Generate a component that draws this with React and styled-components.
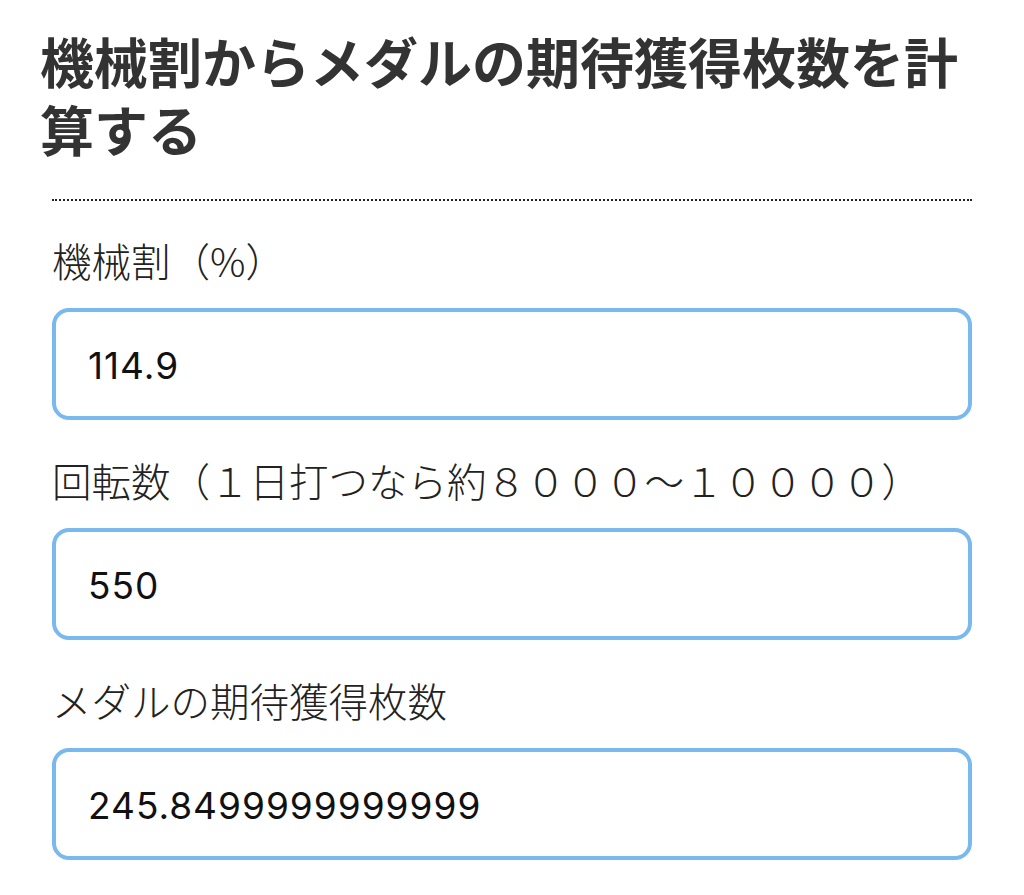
import React from "react";
import styled, { createGlobalStyle } from "styled-components";

const Global = createGlobalStyle`
  html, body { margin: 0; padding: 0; background: #fff; }
  body { font-family: "Noto Sans CJK JP", "Noto Sans", sans-serif; }
`;

const Page = styled.div`
  width: 1024px;
  box-sizing: border-box;
  padding: 27px 40px 0 40px;
`;

const Title = styled.h1`
  margin: 0;
  font-family: "Noto Sans CJK JP", sans-serif;
  font-weight: 700;
  font-size: 54px;
  line-height: 68px;
  color: #333;
  letter-spacing: 0;
`;

const Form = styled.div`
  margin: 36px 12px 0 12px;
  border-top: 2px dotted #222;
  padding-top: 34px;
  display: flex;
  flex-direction: column;
`;

const Field = styled.div`
  display: flex;
  flex-direction: column;
  gap: 23px;
  & + & {
    margin-top: 35px;
  }
`;

const Label = styled.label`
  font-family: "Noto Sans CJK JP", sans-serif;
  font-weight: 300;
  font-size: 39.5px;
  line-height: 50px;
  color: #222;
  white-space: nowrap;
`;

const Input = styled.input`
  box-sizing: border-box;
  width: 100%;
  height: 112px;
  margin: 0;
  border: 4px solid #7ab9ee;
  border-radius: 17px;
  padding: 2px 32px 0 32px;
  font-family: "Inter", "Liberation Sans", sans-serif;
  font-size: 37px;
  letter-spacing: 1px;
  color: #111;
  background: #fff;
  outline: none;
`;

const fields = [
  { label: "機械割（%）", value: "114.9" },
  { label: "回転数（１日打つなら約８０００～１００００）", value: "550" },
  { label: "メダルの期待獲得枚数", value: "245.8499999999999" },
];

export default function App() {
  return (
    <Page>
      <Global />
      <Title>機械割からメダルの期待獲得枚数を計算する</Title>
      <Form>
        {fields.map((f) => (
          <Field key={f.label}>
            <Label>{f.label}</Label>
            <Input type="text" defaultValue={f.value} readOnly />
          </Field>
        ))}
      </Form>
    </Page>
  );
}
